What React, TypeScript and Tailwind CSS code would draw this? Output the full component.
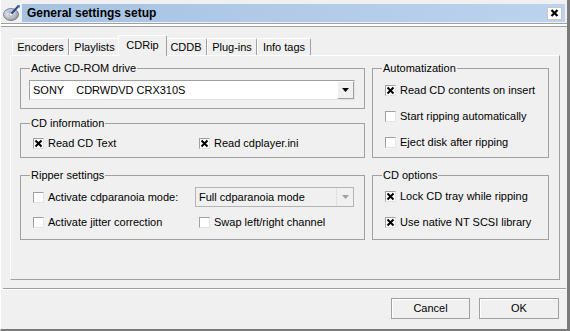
import React from "react";

function Check({ checked }: { checked?: boolean }) {
  return (
    <span className="w-[11px] h-[11px] shrink-0 bg-white border border-t-[#a0a0a0] border-l-[#a0a0a0] border-r-[#e3e3e3] border-b-[#e3e3e3] flex items-center justify-center">
      {checked && (
        <svg width="9" height="9" viewBox="0 0 9 9">
          <path d="M1.5 1.5 L7.5 7.5 M7.5 1.5 L1.5 7.5" stroke="#000" strokeWidth="2" />
        </svg>
      )}
    </span>
  );
}

function CheckLabel({ checked, label, w }: { checked?: boolean; label: string; w?: string }) {
  return (
    <div className={`flex items-center gap-[4px] h-[13px] ${w ?? ""}`}>
      <Check checked={checked} />
      <span className="leading-[13px] whitespace-nowrap">{label}</span>
    </div>
  );
}

function Arrow({ color }: { color: string }) {
  return (
    <svg width="7" height="4" viewBox="0 0 7 4">
      <path d="M0 0 H7 L3.5 4 Z" fill={color} />
    </svg>
  );
}

function Group({ title, h, children }: { title: string; h: string; children: React.ReactNode }) {
  return (
    <fieldset className={`border border-[#a0a0a0] px-[9px] ${h} min-w-0`}>
      <legend className="px-[1px] leading-[13px] text-[11px]">{title}</legend>
      {children}
    </fieldset>
  );
}

function Tab({ label, w, selected }: { label: string; w: string; selected?: boolean }) {
  if (selected) {
    return (
      <div
        className={`${w} h-[21px] -mb-[1px] -mx-[2px] relative z-10 bg-[#f0f0f0] border-t border-l border-r border-t-white border-l-white border-r-[#a0a0a0] rounded-t-[2px] flex items-start justify-center pt-[3px] leading-[13px]`}
      >
        {label}
      </div>
    );
  }
  return (
    <div
      className={`${w} h-[17px] bg-[#f0f0f0] border-t border-l border-r border-t-white border-l-white border-r-[#a0a0a0] rounded-t-[2px] flex items-start justify-center pt-[2px] leading-[13px]`}
    >
      {label}
    </div>
  );
}

export default function App() {
  return (
    <div className="w-[570px] h-[331px] bg-[#f0f0f0] flex flex-col border-l border-l-white border-r-[3px] border-r-[#7a7a7a] border-b-[2px] border-b-[#7a7a7a] overflow-hidden text-[11px] text-black font-['Liberation_Sans',Arial,sans-serif]">
      {/* Title bar */}
      <div className="flex mt-[4px] h-[18px] mr-[2px]">
        <div className="w-[21px] flex items-start justify-start pl-[2px]">
          <svg width="18" height="17" viewBox="0 0 18 17">
            <defs>
              <radialGradient id="cd" cx="0.4" cy="0.4" r="0.7">
                <stop offset="0" stopColor="#f4f4f4" />
                <stop offset="0.6" stopColor="#b8bcc4" />
                <stop offset="1" stopColor="#7c8290" />
              </radialGradient>
            </defs>
            <ellipse cx="8" cy="10.5" rx="7.5" ry="6" fill="url(#cd)" stroke="#6a7080" strokeWidth="0.8" />
            <path d="M3 8 Q6 5 9 7 L8 10 Z" fill="#9ec0ea" opacity="0.9" />
            <ellipse cx="8" cy="10.5" rx="2" ry="1.6" fill="#ffffff" stroke="#7a8090" strokeWidth="0.6" />
            <path d="M9 9 L15.5 2" stroke="#2a4a8a" strokeWidth="2" strokeLinecap="round" />
            <path d="M14 1.5 L17 1 L16.5 4 Z" fill="#4a7ac8" />
          </svg>
        </div>
        <div className="flex-1 flex items-center justify-between bg-gradient-to-r from-[#a6c2e2] to-[#bcd3ef]">
          <span className="pl-[5px] font-bold text-[12px] leading-[18px]">General settings setup</span>
          <div className="w-[15px] h-[13px] mr-[3px] bg-white border border-[#c8c8c8] flex items-center justify-center">
            <svg width="9" height="8" viewBox="0 0 9 8">
              <path d="M1.5 1 L7.5 7 M7.5 1 L1.5 7" stroke="#000" strokeWidth="2.2" />
            </svg>
          </div>
        </div>
      </div>

      {/* double line */}
      <div className="mt-[1px] h-[4px] border-t border-b border-[#a0a0a0] bg-white" />

      {/* Tabs */}
      <div className="mt-[8px] ml-[11px] h-[20px] flex items-end">
        <Tab label="Encoders" w="w-[57px]" />
        <Tab label="Playlists" w="w-[51px]" />
        <Tab label="CDRip" w="w-[49px]" selected />
        <Tab label="CDDB" w="w-[42px]" />
        <Tab label="Plug-ins" w="w-[50px]" />
        <Tab label="Info tags" w="w-[54px]" />
      </div>

      {/* Panel */}
      <div className="ml-[9px] w-[550px] h-[225px] border-t border-l border-t-white border-l-white border-r border-b border-r-[#a0a0a0] border-b-[#a0a0a0] flex gap-[7px] pl-[9px] pt-[6px]">
        {/* left column */}
        <div className="w-[345px] flex flex-col">
          <Group title="Active CD-ROM drive" h="h-[47px]">
            <div className="mt-[5px] -ml-[1px] w-[326px] h-[20px] flex bg-white border border-t-[#a0a0a0] border-l-[#a0a0a0] border-b-[#e3e3e3] border-r-[#e3e3e3]">
              <div className="flex-1 pl-[3px] flex items-center whitespace-pre leading-[13px]">SONY    CDRWDVD CRX310S</div>
              <div className="w-[17px] bg-[#f0f0f0] border border-t-white border-l-white border-r-[#a0a0a0] border-b-[#a0a0a0] flex items-center justify-center">
                <Arrow color="#000" />
              </div>
            </div>
          </Group>
          <div className="mt-[8px]">
            <Group title="CD information" h="h-[41px]">
              <div className="mt-[7px] ml-[3px] flex">
                <CheckLabel checked label="Read CD Text" w="w-[166px]" />
                <CheckLabel checked label="Read cdplayer.ini" />
              </div>
            </Group>
          </div>
          <div className="mt-[11px]">
            <Group title="Ripper settings" h="h-[71px]">
              <div className="mt-[5px] ml-[3px] h-[20px] flex items-center">
                <CheckLabel label="Activate cdparanoia mode:" w="w-[162px]" />
                <div className="w-[159px] h-[20px] flex bg-[#f0f0f0] border border-[#b4b4b4]">
                  <div className="flex-1 pl-[3px] flex items-center leading-[13px]">Full cdparanoia mode</div>
                  <div className="w-[17px] border-l border-l-[#e0e0e0] flex items-center justify-center">
                    <Arrow color="#a0a0a0" />
                  </div>
                </div>
              </div>
              <div className="mt-[9px] ml-[3px] flex">
                <CheckLabel label="Activate jitter correction" w="w-[166px]" />
                <CheckLabel label="Swap left/right channel" />
              </div>
            </Group>
          </div>
        </div>

        {/* right column */}
        <div className="w-[177px] flex flex-col">
          <Group title="Automatization" h="h-[96px]">
            <div className="mt-[9px] ml-[3px] flex flex-col gap-[13px]">
              <CheckLabel checked label="Read CD contents on insert" />
              <CheckLabel label="Start ripping automatically" />
              <CheckLabel label="Eject disk after ripping" />
            </div>
          </Group>
          <div className="mt-[11px]">
            <Group title="CD options" h="h-[71px]">
              <div className="mt-[8px] ml-[3px] flex flex-col gap-[13px]">
                <CheckLabel checked label="Lock CD tray while ripping" />
                <CheckLabel checked label="Use native NT SCSI library" />
              </div>
            </Group>
          </div>
        </div>
      </div>

      {/* separator */}
      <div className="mt-[8px] ml-[2px] mr-[1px] h-[2px] border-t border-t-[#a0a0a0] border-b border-b-white" />

      {/* buttons */}
      <div className="mt-[8px] flex justify-end gap-[9px] pr-[8px]">
        <button className="w-[79px] h-[21px] bg-[#f0f0f0] border border-[#a0a0a0] shadow-[inset_1px_1px_0_#ffffff] leading-[13px] text-[11px]">
          Cancel
        </button>
        <button className="w-[80px] h-[21px] bg-[#f0f0f0] border border-[#a0a0a0] shadow-[inset_1px_1px_0_#ffffff] leading-[13px] text-[11px]">
          OK
        </button>
      </div>
    </div>
  );
}
